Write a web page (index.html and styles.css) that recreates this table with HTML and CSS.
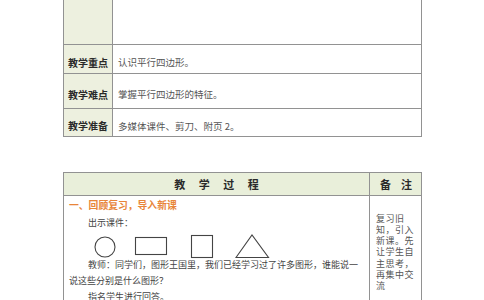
FILE: index.html
```html
<!DOCTYPE html>
<html lang="zh-CN">
<head>
<meta charset="utf-8">
<title>平行四边形 教学设计</title>
<link rel="stylesheet" href="styles.css">
</head>
<body>
<table class="sheet info">
  <colgroup><col class="c-label"><col></colgroup>
  <tr class="r0"><td class="label"></td><td></td></tr>
  <tr class="r1"><td class="label">教学重点</td><td class="text">认识平行四边形。</td></tr>
  <tr class="r2"><td class="label">教学难点</td><td class="text">掌握平行四边形的特征。</td></tr>
  <tr class="r3"><td class="label">教学准备</td><td class="text">多媒体课件、剪刀、附页 2。</td></tr>
</table>

<table class="sheet process">
  <colgroup><col><col class="c-note"></colgroup>
  <tr class="head">
    <th class="h-main">教学过程</th>
    <th class="h-note">备注</th>
  </tr>
  <tr class="body">
    <td class="main">
      <div class="sec-title">一、回顾复习，导入新课</div>
      <p class="para">出示课件：</p>
      <svg class="shapes" width="180" height="24" viewBox="0 0 180 24">
        <circle cx="14" cy="14" r="10" fill="none" stroke="#444" stroke-width="1.1"/>
        <rect x="44.5" y="4.5" width="31" height="17" fill="none" stroke="#444" stroke-width="1.1"/>
        <rect x="100.5" y="2.5" width="21" height="22" fill="none" stroke="#444" stroke-width="1.1"/>
        <polygon points="145,24.5 161,2 177.5,24.5" fill="none" stroke="#444" stroke-width="1.1"/>
      </svg>
      <p class="para talk">教师：同学们，图形王国里，我们已经学习过了许多图形，谁能说一说这些分别是什么图形？</p>
      <p class="para talk">指名学生进行回答。</p>
    </td>
    <td class="note">复习旧知，引入新课。先让学生自主思考，再集中交流</td>
  </tr>
</table>
</body>
</html>
```

FILE: styles.css
```css
html, body {
  margin: 0;
  padding: 0;
  background: #ffffff;
}

body {
  font-family: "Noto Sans CJK SC", "Noto Sans", sans-serif;
  color: #555;
}

.sheet {
  width: 359px;
  margin-left: 63px;
  border-collapse: collapse;
  table-layout: fixed;
}

.sheet td,
.sheet th {
  border: 1px solid #929292;
  padding: 0;
}

/* ---------- top info table ---------- */
.info .c-label { width: 49px; }

.info .r0 td { border-top: none; }
.info .r0 { height: 44px; }
.info .r1 { height: 29px; }
.info .r2 { height: 35px; }
.info .r3 { height: 28px; }

.info .label {
  background: #edf0df;
  text-align: center;
  font-size: 10px;
  font-weight: 700;
  color: #2a2a2a;
  vertical-align: middle;
  padding-top: 7px;
  white-space: nowrap;
}

.info .text {
  font-size: 9.5px;
  color: #555;
  padding-left: 5px;
  padding-top: 7px;
  vertical-align: middle;
  white-space: nowrap;
}

/* ---------- process table ---------- */
.process {
  margin-top: 35px;
}

.process .c-note { width: 52px; }

.process .head {
  height: 23px;
  background: #e9efda;
}

.process th {
  font-weight: 700;
  color: #2a2a2a;
  font-size: 11px;
  line-height: 14px;
  text-align: center;
  vertical-align: middle;
  white-space: nowrap;
}

.process .h-main {
  letter-spacing: 13.5px;
  padding-left: 13.5px;
}

.process .h-note {
  letter-spacing: 10px;
  padding-left: 10px;
}

.process .body { height: 200px; }

.process .main {
  vertical-align: top;
  padding: 1px 3px 0 5px;
}

.sec-title {
  color: #e8853a;
  font-weight: 700;
  font-size: 9.8px;
  line-height: 17px;
}

.para {
  margin: 0;
  font-size: 9px;
  line-height: 17px;
  text-indent: 19px;
  color: #444;
}

.talk {
  line-height: 16.4px;
}

.shapes {
  display: block;
  margin: 2px 0 0 22px;
  overflow: visible;
}

.process .note {
  vertical-align: top;
  padding: 17px 5px 0 6px;
  font-size: 9px;
  line-height: 11.3px;
  letter-spacing: 0.5px;
  color: #555;
  word-break: break-all;
}
```
